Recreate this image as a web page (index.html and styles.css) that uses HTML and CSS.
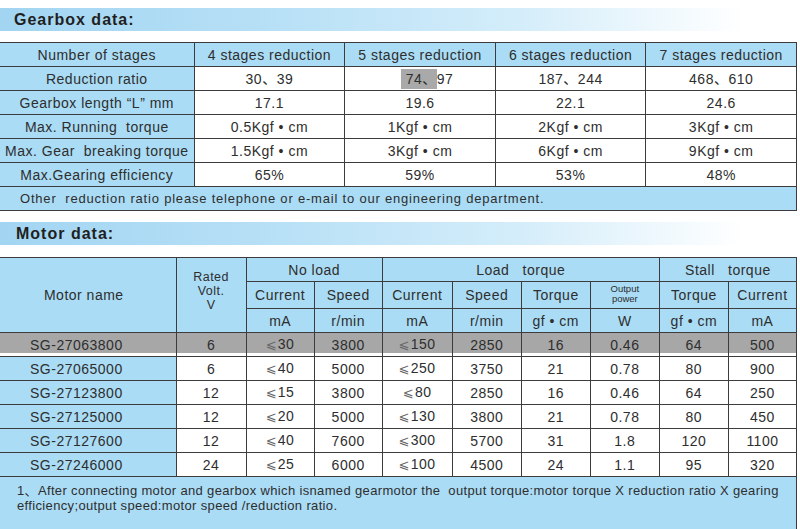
FILE: index.html
```html
<!DOCTYPE html>
<html>
<head>
<meta charset="utf-8">
<link rel="stylesheet" href="styles.css">
</head>
<body>
<div class="page">
  <div class="title-bar"><span class="title">Gearbox data:</span></div>
  <table class="grid gearbox">
    <colgroup>
      <col class="gc1"><col class="gc"><col class="gc"><col class="gc"><col class="gc">
    </colgroup>
    <tr class="head">
      <td>Number of stages</td><td>4 stages reduction</td><td>5 stages reduction</td><td>6 stages reduction</td><td>7 stages reduction</td>
    </tr>
    <tr>
      <td class="lab">Reduction ratio</td><td>30、39</td><td class="shift"><span class="hl">74、</span>97</td><td>187、244</td><td>468、610</td>
    </tr>
    <tr>
      <td class="lab">Gearbox length “L” mm</td><td>17.1</td><td>19.6</td><td>22.1</td><td>24.6</td>
    </tr>
    <tr>
      <td class="lab">Max. Running&nbsp; torque</td><td>0.5Kgf • cm</td><td>1Kgf • cm</td><td>2Kgf • cm</td><td>3Kgf • cm</td>
    </tr>
    <tr>
      <td class="lab">Max. Gear&nbsp; breaking torque</td><td>1.5Kgf • cm</td><td>3Kgf • cm</td><td>6Kgf • cm</td><td>9Kgf • cm</td>
    </tr>
    <tr>
      <td class="lab">Max.Gearing efficiency</td><td>65%</td><td>59%</td><td>53%</td><td>48%</td>
    </tr>
    <tr>
      <td class="note" colspan="5">Other&nbsp; reduction ratio please telephone or e-mail to our engineering department.</td>
    </tr>
  </table>

  <div class="title-bar motor-bar"><span class="title">Motor data:</span></div>
  <table class="grid motor">
    <colgroup>
      <col class="m1"><col class="m70"><col class="m68"><col class="m68"><col class="m70"><col class="m69"><col class="m69"><col class="m69"><col class="m69"><col class="m68">
    </colgroup>
    <tr class="head">
      <td rowspan="3" class="mname">Motor name</td>
      <td rowspan="3" class="rated"><div class="stack"><span>Rated</span><span>Volt.</span><span>V</span></div></td>
      <td colspan="2">No load</td>
      <td colspan="4">Load&nbsp;&nbsp; torque</td>
      <td colspan="2">Stall&nbsp;&nbsp; torque</td>
    </tr>
    <tr class="head">
      <td>Current</td><td>Speed</td><td>Current</td><td>Speed</td><td>Torque</td><td class="small"><div class="stack"><span>Output</span><span>power</span></div></td><td>Torque</td><td>Current</td>
    </tr>
    <tr class="head">
      <td>mA</td><td>r/min</td><td>mA</td><td>r/min</td><td>gf • cm</td><td>W</td><td>gf • cm</td><td>mA</td>
    </tr>
    <tr class="gray">
      <td class="name">SG-27063800</td><td>6</td><td><span class="le">⩽</span>30</td><td>3800</td><td><span class="le">⩽</span>150</td><td>2850</td><td>16</td><td>0.46</td><td>64</td><td>500</td>
    </tr>
    <tr>
      <td class="name">SG-27065000</td><td>6</td><td><span class="le">⩽</span>40</td><td>5000</td><td><span class="le">⩽</span>250</td><td>3750</td><td>21</td><td>0.78</td><td>80</td><td>900</td>
    </tr>
    <tr>
      <td class="name">SG-27123800</td><td>12</td><td><span class="le">⩽</span>15</td><td>3800</td><td><span class="le">⩽</span>80</td><td>2850</td><td>16</td><td>0.46</td><td>64</td><td>250</td>
    </tr>
    <tr>
      <td class="name">SG-27125000</td><td>12</td><td><span class="le">⩽</span>20</td><td>5000</td><td><span class="le">⩽</span>130</td><td>3800</td><td>21</td><td>0.78</td><td>80</td><td>450</td>
    </tr>
    <tr>
      <td class="name">SG-27127600</td><td>12</td><td><span class="le">⩽</span>40</td><td>7600</td><td><span class="le">⩽</span>300</td><td>5700</td><td>31</td><td>1.8</td><td>120</td><td>1100</td>
    </tr>
    <tr>
      <td class="name">SG-27246000</td><td>24</td><td><span class="le">⩽</span>25</td><td>6000</td><td><span class="le">⩽</span>100</td><td>4500</td><td>24</td><td>1.1</td><td>95</td><td>320</td>
    </tr>
    <tr>
      <td class="mnote" colspan="10">1、After connecting motor and gearbox which isnamed gearmotor the&nbsp; output torque:motor torque X reduction ratio X gearing<br>efficiency;output speed:motor speed /reduction ratio.</td>
    </tr>
  </table>
</div>
</body>
</html>
```

FILE: styles.css
```css
html, body {
  margin: 0;
  padding: 0;
  background: #ffffff;
}

body {
  font-family: "Liberation Sans", Arial, "Noto Sans CJK SC", sans-serif;
  color: #2e2e2e;
}

.page {
  width: 800px;
  padding-top: 8px;
}

.title-bar {
  height: 23px;
  display: flex;
  align-items: center;
  padding-left: 14px;
  margin-bottom: 11px;
  background: linear-gradient(to right, #a2d5f2 0%, #b8e0f6 35%, #d4edfa 65%, #ffffff 93%);
}

.motor-bar {
  margin-top: 11px;
  margin-bottom: 12px;
  padding-left: 16px;
}

.title {
  font-weight: bold;
  font-size: 16px;
  letter-spacing: 1px;
  color: #1f1f1f;
}

.grid {
  border-collapse: collapse;
  table-layout: fixed;
  width: 797px;
  font-size: 14px;
  letter-spacing: 0.5px;
}

.grid td {
  border: 1px solid #3c3c3c;
  height: 23px;
  padding: 0;
  text-align: center;
  vertical-align: middle;
  background: #ffffff;
  white-space: nowrap;
  line-height: 16px;
}

.grid tr > td:first-child {
  border-left: none;
}

.gc1 { width: 194px; }
.gc { width: 150.5px; }

.grid .head td,
.grid td.lab,
.grid td.name,
.grid td.note,
.grid td.mnote {
  background: #aadcf5;
}

.grid td.shift {
  padding-left: 14px;
}

.hl {
  display: inline-block;
  background: #a9a9a9;
  padding: 0 0 0 5px;
  line-height: 20px;
}

.grid td.note {
  text-align: left;
  padding-left: 20px;
  font-size: 13px;
  letter-spacing: 0.8px;
}

.m1 { width: 176px; }
.m70 { width: 70px; }
.m68 { width: 68px; }
.m69 { width: 69px; }

.grid td.mname {
  padding-right: 8px;
}

.stack {
  display: flex;
  flex-direction: column;
  align-items: center;
}

.grid td.rated {
  font-size: 12.5px;
  padding-bottom: 8px;
}

.grid td.rated .stack span {
  display: block;
  height: 14px;
  line-height: 14px;
}

.grid td.small {
  font-size: 9.5px;
  letter-spacing: 0;
  padding-bottom: 3px;
}

.grid td.small .stack span {
  display: block;
  height: 10px;
  line-height: 10px;
}

.grid td.name {
  text-align: left;
  padding-left: 30px;
  letter-spacing: 0.5px;
}

.le {
  font-family: "DejaVu Sans", sans-serif;
  font-size: 13px;
  color: #666666;
  letter-spacing: 0;
  margin-right: 1px;
}

.grid .gray td {
  background: #a7a7a7;
  box-shadow: inset 0 -3px 0 #ffffff;
}

.grid td.mnote {
  height: 53px;
  vertical-align: top;
  text-align: left;
  white-space: normal;
  padding: 6px 0 0 17px;
  font-size: 13px;
  line-height: 15px;
  letter-spacing: 0.35px;
}
```
